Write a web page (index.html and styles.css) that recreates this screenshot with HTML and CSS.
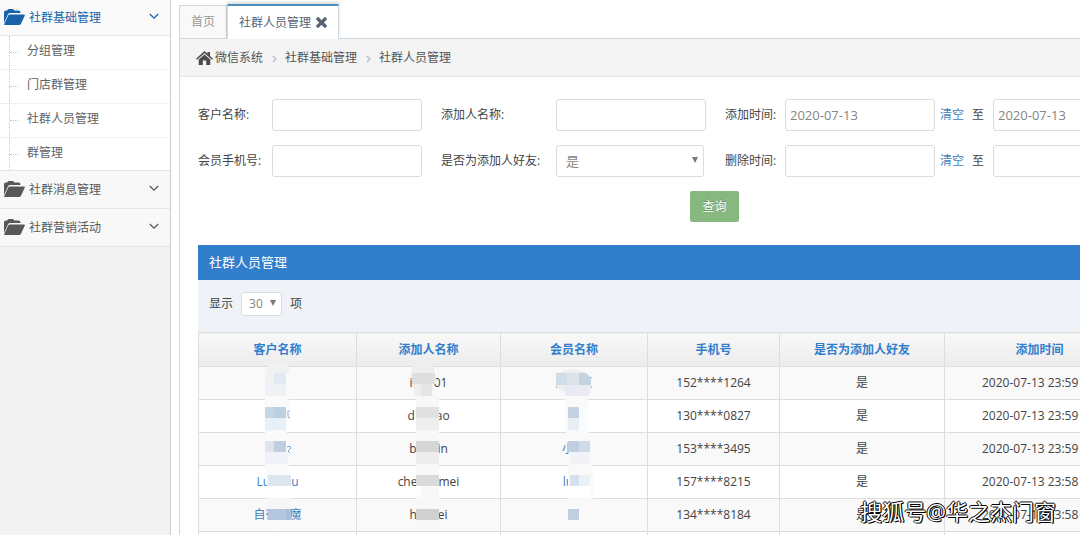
FILE: index.html
```html
<!DOCTYPE html>
<html lang="zh-CN">
<head>
<meta charset="utf-8">
<title>社群人员管理</title>
<link rel="stylesheet" href="styles.css">
</head>
<body>
<svg class="defs" aria-hidden="true">
  <symbol id="folder" viewBox="0 0 21 17"><path d="M0 14V3.200Q0 1.500 1.700 1.500H3.200Q3.500 0 5 0H8.500Q10 0 10.200 1.500H14.500Q16.500 1.500 16.500 3.500V4H6.200Q4.800 4 4 5.300Z"/><path d="M5.600 5.500H20Q21.300 5.500 20.700 6.700L17 14.800Q16.500 16 15 16H1Q-.2 16 .4 14.800L4.200 6.500Q4.600 5.500 5.600 5.500Z"/></symbol>
  <symbol id="down" viewBox="0 0 10 7"><path d="M.8 1 5 5.200 9.200 1" fill="none" stroke="currentColor" stroke-width="1.300"/></symbol>
  <symbol id="right" viewBox="0 0 5 8"><path d="M.8.800 4 4 .8 7.200" fill="none" stroke="currentColor" stroke-width="1.200"/></symbol>
</svg>
<div class="layout">
  <nav class="sidebar">
    <a class="group group-open" href="#"><svg class="folder"><use href="#folder"/></svg><span>社群基础管理</span><svg class="down"><use href="#down"/></svg></a>
    <ul class="submenu">
      <li><a href="#">分组管理</a></li>
      <li><a href="#">门店群管理</a></li>
      <li><a href="#">社群人员管理</a></li>
      <li><a href="#">群管理</a></li>
    </ul>
    <a class="group" href="#"><svg class="folder"><use href="#folder"/></svg><span>社群消息管理</span><svg class="down"><use href="#down"/></svg></a>
    <a class="group" href="#"><svg class="folder"><use href="#folder"/></svg><span>社群营销活动</span><svg class="down"><use href="#down"/></svg></a>
  </nav>
  <main class="main">
    <div class="tabs">
      <a class="tab" href="#">首页</a>
      <a class="tab tab-active" href="#">社群人员管理<svg class="close" viewBox="0 0 11 11"><path d="M2 2 9 9M9 2 2 9" stroke="currentColor" stroke-width="3.200" stroke-linecap="square"/></svg></a>
    </div>
    <div class="frame">
      <div class="crumbs">
        <svg class="home" viewBox="0 0 17 14"><path d="M8.500 0 11.500 2.700V1H14V5L17 7.700 16 8.800 8.500 2.300 1 8.800 0 7.700Z"/><path d="M2.700 8.500 8.500 3.500 14.300 8.500V14H10.200V9.500H6.800V14H2.700Z"/></svg>
        <a href="#">微信系统</a><svg class="right"><use href="#right"/></svg><a href="#">社群基础管理</a><svg class="right"><use href="#right"/></svg><span>社群人员管理</span>
      </div>
      <form class="search">
        <label for="customer">客户名称:</label><input id="customer" type="text">
        <label for="adder">添加人名称:</label><input id="adder" type="text">
        <label for="add-from">添加时间:</label><input id="add-from" type="text" value="2020-07-13">
        <span class="range"><a href="#">清空</a><label for="add-to">至</label></span><input id="add-to" type="text" value="2020-07-13">
        <label for="phone">会员手机号:</label><input id="phone" type="text">
        <label for="friend">是否为添加人好友:</label><span class="picker"><select id="friend"><option>是</option><option>否</option></select></span>
        <label for="del-from">删除时间:</label><input id="del-from" type="text">
        <span class="range"><a href="#">清空</a><label for="del-to">至</label></span><input id="del-to" type="text">
        <div class="actions"><button type="button">查询</button></div>
      </form>
      <section class="panel">
        <h2>社群人员管理</h2>
        <div class="length"><label for="size">显示</label><span class="picker picker-small"><select id="size"><option>30</option><option>50</option></select></span><span>项</span></div>
        <div class="grid">
          <table>
            <colgroup><col class="c1"><col class="c2"><col class="c3"><col class="c4"><col class="c5"><col class="c6"></colgroup>
            <thead><tr><th>客户名称</th><th>添加人名称</th><th>会员名称</th><th>手机号</th><th>是否为添加人好友</th><th>添加时间</th></tr></thead>
            <tbody>
              <tr><td></td><td><span class="masked"><span>i</span><span>01</span></span></td><td></td><td>152****1264</td><td>是</td><td class="time">2020-07-13 23:59</td></tr>
              <tr><td></td><td><span class="masked"><span>d</span><span>ao</span></span></td><td></td><td>130****0827</td><td>是</td><td class="time">2020-07-13 23:59</td></tr>
              <tr><td></td><td><span class="masked"><span>b</span><span>in</span></span></td><td><a class="masked masked-tight" href="#"><span>小</span><span></span></a></td><td>153****3495</td><td>是</td><td class="time">2020-07-13 23:59</td></tr>
              <tr><td><a class="masked" href="#"><span>Lu</span><span>u</span></a></td><td><span class="masked"><span>che</span><span>mei</span></span></td><td><a class="masked masked-tight" href="#"><span>lu</span><span></span></a></td><td>157****8215</td><td>是</td><td class="time">2020-07-13 23:58</td></tr>
              <tr><td><a class="masked masked-tight" href="#"><span>自律</span><span>魔</span></a></td><td><span class="masked"><span>h</span><span>ei</span></span></td><td></td><td>134****8184</td><td>是</td><td class="time">2020-07-13 23:58</td></tr>
              <tr><td></td><td></td><td></td><td></td><td></td><td></td></tr>
            </tbody>
          </table>
          <svg class="mosaic" viewBox="198 332 500 203" aria-hidden="true">
            <path fill="#f0f1f2" d="M266 373Q267 361 279 361 289 361 290 373L286 373V396H265V384Z"/>
            <path fill="#fafafa" d="M265 396H288L290 407 286 430 289 441 288 464 291 475V498L290 520Q286 531 279 531 269 530 268 520L267 475 265 464Z"/>
            <path fill="#e3e9f0" d="M274 373h12v11h-12z"/><path fill="#eef1f7" d="M265 384h9v12h-9z"/>
            <path fill="#c4d7e6" d="M265 407h9v11h-9z"/><path fill="#bbd1e2" d="M274 407h12v11h-12z"/><path fill="#e8f0f7" d="M265 418h21v12h-21z"/>
            <path fill="#dfe4eb" d="M265 441h9v11h-9z"/><path fill="#bfcfe2" d="M274 441h12v11h-12z"/><path fill="#eff2f6" d="M265 452h23v12h-23z"/>
            <path fill="#dbe6ee" d="M268 475h23v11h-23z"/><path fill="#fff" d="M268 486h23v11h-23z"/><path fill="#f5f6f7" d="M268 498h23v11h-23z"/>
            <path fill="#b4c7df" d="M268 509h18v11h-18z"/><path fill="#a5c0dd" d="M286 509h5v11h-5z"/>
            <path d="M287 412q2-2 3 0m-2 1v3q0 2 2 2M287 447q5-2 3 2l-2 2 2 2" fill="none" stroke="#79a6d2"/>
            <path fill="#eee" d="M411 373Q413 361 422 361 433 361 435 373L437 384H432V396H415Z"/>
            <path fill="#f8f8f8" d="M416 396H439V498L438 520Q434 527 426 527 419 525 416 520Z"/>
            <path fill="#dedede" d="M412 373h23v11h-23z"/><path fill="#e5e5e5" d="M421 384h11v12h-11z"/>
            <path fill="#e0e0e0" d="M416 407h23v11h-23z"/><path fill="#f0eeec" d="M416 418h23v12h-23z"/>
            <path fill="#d6d6d6" d="M416 441h23v11h-23z"/><path fill="#ededed" d="M416 452h23v12h-23z"/>
            <path fill="#dadada" d="M416 475h23v11h-23z"/><path fill="#fff" d="M416 486h5v11h-5z"/>
            <path fill="#d0d0d0" d="M416 509h23v11h-23z"/>
            <path fill="#eee" d="M558 373Q570 366 586 373L591 378V390L588 396H565V392L556 388Z"/>
            <path fill="#f9f9f9" d="M565 396H588V430L591 441 590 464 593 466V498L590 520Q587 530 579 530 569 529 568 520V475L569 441 565 430Z"/>
            <path fill="#cfdde9" d="M556 373h11v12h-11z"/><path fill="#dce3ea" d="M567 373h12v12h-12z"/><path fill="#c4d3e2" d="M579 373h7l5 5v7h-12z"/><path fill="#e8ecf2" d="M565 385h23v11h-23z"/>
            <path fill="#c4d1e2" d="M568 407h11v11h-11z"/><path fill="#f9fcff" d="M579 407h9v23h-9z"/><path fill="#e9edf4" d="M568 418h11v12h-11z"/>
            <path fill="#bfcfe0" d="M568 441h11v11h-11z"/><path fill="#cddbe8" d="M579 441h11v11h-11z"/><path fill="#f1f3f7" d="M570 452h20v12h-20z"/>
            <path fill="#d5e1ec" d="M570 475h9v11h-9z"/><path fill="#eaf1f7" d="M579 475h11v11h-11z"/><path fill="#fff" d="M568 486h23v11h-23z"/><path fill="#c0cfe0" d="M568 509h11v11h-11z"/>
            <path d="M556 387h1M591 377v1m0 9h1" stroke="#4a8fc8"/>
          </svg>
        </div>
      </section>
    </div>
  </main>
  <div class="watermark">搜狐号@华之杰门窗</div>
</div>
</body>
</html>
```
FILE: styles.css
```css
* { box-sizing: border-box; }
body {
  margin: 0;
  overflow: hidden;
  background: #fff;
  color: #444;
  font: 12px/20px "Open Sans", "Noto Sans CJK SC", sans-serif;
}
a { color: #3f82bd; text-decoration: none; }
svg { flex: none; fill: currentColor; }
.defs { display: none; }
.layout { position: relative; display: flex; height: 100vh; overflow: hidden; }

.sidebar {
  flex: 0 0 171px;
  margin-right: 8px;
  background: #f2f2f2;
  border-right: 1px solid #ccc;
}
.group {
  display: flex;
  align-items: center;
  height: 38px;
  padding: 0 11px 0 4px;
  background: #f8f8f8;
  border-bottom: 1px solid #e5e5e5;
  color: #585858;
}
.group span { flex: 1; }
.group-open { height: 36px; color: #1963aa; background: #fafafa; }
.folder { width: 21px; height: 17px; margin-right: 4px; }
.down { width: 10px; height: 7px; margin-bottom: 2px; }
.submenu {
  position: relative;
  margin: 0;
  padding: 0;
  list-style: none;
  background: #fff;
  border-bottom: 1px solid #e5e5e5;
}
.submenu::before {
  content: "";
  position: absolute;
  top: 0;
  bottom: 0;
  left: 9px;
  border-left: 1px dotted #b4cbdd;
}
.submenu a {
  display: flex;
  align-items: center;
  height: 34px;
  padding-bottom: 3px;
  color: #616161;
  border-bottom: 1px dotted #e4e4e4;
}
.submenu a::before {
  content: "";
  width: 8px;
  margin: 3px 9px 0 10px;
  border-top: 1px dotted #b4cbdd;
}
.submenu li:last-child a { height: 32px; border-bottom: 0; }

.main { flex: 1; min-width: 0; }
.tabs { display: flex; align-items: flex-end; height: 39px; border-bottom: 1px solid #cfd8e2; }
.tab {
  display: flex;
  align-items: center;
  height: 33px;
  padding: 0 11px;
  color: #999;
  background: #f9f9f9;
  border: 1px solid #cfd8e2;
  border-bottom: 0;
}
.tab-active {
  height: 35px;
  margin-bottom: -1px;
  color: #576373;
  background: #fff;
  border-top: 2px solid #4c8fbd;
  box-shadow: 0 -2px 3px rgba(0, 0, 0, .15);
}
.close { width: 11px; height: 11px; margin-left: 5px; }
.frame { border-left: 1px solid #cfd8e2; }
.crumbs {
  display: flex;
  align-items: center;
  height: 38px;
  padding-left: 16px;
  background: #f4f4f4;
  border-bottom: 1px solid #e5e5e5;
}
.crumbs a, .crumbs span { color: #555; }
.home { width: 17px; height: 14px; margin-right: 2px; color: #4c4c4c; }
.right { width: 5px; height: 8px; margin: 2px 8px 0 9px; color: #b2b6bf; }

.search {
  display: grid;
  grid-template-columns: 74px 169px 115px 169px 60px 155px 53px 150px;
  row-gap: 14px;
  align-items: center;
  padding: 22px 0 0 18px;
}
input, select {
  width: 150px;
  height: 32px;
  padding: 0 4px;
  color: #858585;
  background: #fff;
  border: 1px solid #dcdcdc;
  border-radius: 3px;
  font: inherit;
  font-size: 13px;
}
.picker { position: relative; display: block; width: 148px; }
.picker select { appearance: none; display: block; width: 100%; padding: 0 9px; }
.picker::after {
  content: "";
  position: absolute;
  top: 12px;
  right: 6px;
  border: 3px solid transparent;
  border-top: 6px solid #777;
  border-bottom: 0;
}
.range { display: flex; gap: 8px; }
.actions { grid-column: 1 / -1; padding-left: 492px; }
.actions button {
  display: block;
  width: 49px;
  height: 31px;
  padding: 0;
  color: #fff;
  background: #87b87f;
  border: 0;
  border-radius: 2px;
  font: inherit;
  text-shadow: 0 -1px 0 rgba(0, 0, 0, .25);
}

.panel { margin: 23px 0 0 18px; }
.panel h2 {
  margin: 0;
  padding-left: 11px;
  color: #fff;
  background: #307ecc;
  font-size: 13px;
  font-weight: 400;
  line-height: 35px;
}
.length {
  display: flex;
  align-items: center;
  gap: 8px;
  height: 52px;
  padding: 0 11px 4px;
  background: #eff3f8;
}
.picker-small { width: 41px; }
.picker-small select { height: 24px; padding: 0 7px; font-size: 12px; }
.picker-small::after { top: 8px; }
.grid { position: relative; overflow: hidden; }
table { width: 937px; table-layout: fixed; border-collapse: collapse; }
.c1 { width: 158px; }
.c2 { width: 144px; }
.c3 { width: 147px; }
.c4 { width: 132px; }
.c5 { width: 165px; }
.c6 { width: 190px; }
th, td {
  height: 33px;
  padding: 0;
  border: 1px solid #ddd;
  text-align: center;
}
th {
  height: 34px;
  color: #307ecc;
  background: linear-gradient(#f8f8f8, #ececec);
  font-weight: 700;
}
tbody tr:nth-child(odd) { background: #f9f9f9; }
.time { padding-left: 37px; text-align: left; }
.masked { display: inline-flex; gap: 21px; }
.masked-tight { gap: 12px; }
.mosaic { position: absolute; top: 0; left: 0; width: 500px; height: 203px; }
.watermark {
  position: absolute;
  right: 24px;
  bottom: 8px;
  color: #fff;
  font-size: 22px;
  line-height: 32px;
  text-shadow: 1px 1px 0 #000, -1px 0 0 #000, 0 -1px 0 #000, 1px 0 0 #000;
}
```
